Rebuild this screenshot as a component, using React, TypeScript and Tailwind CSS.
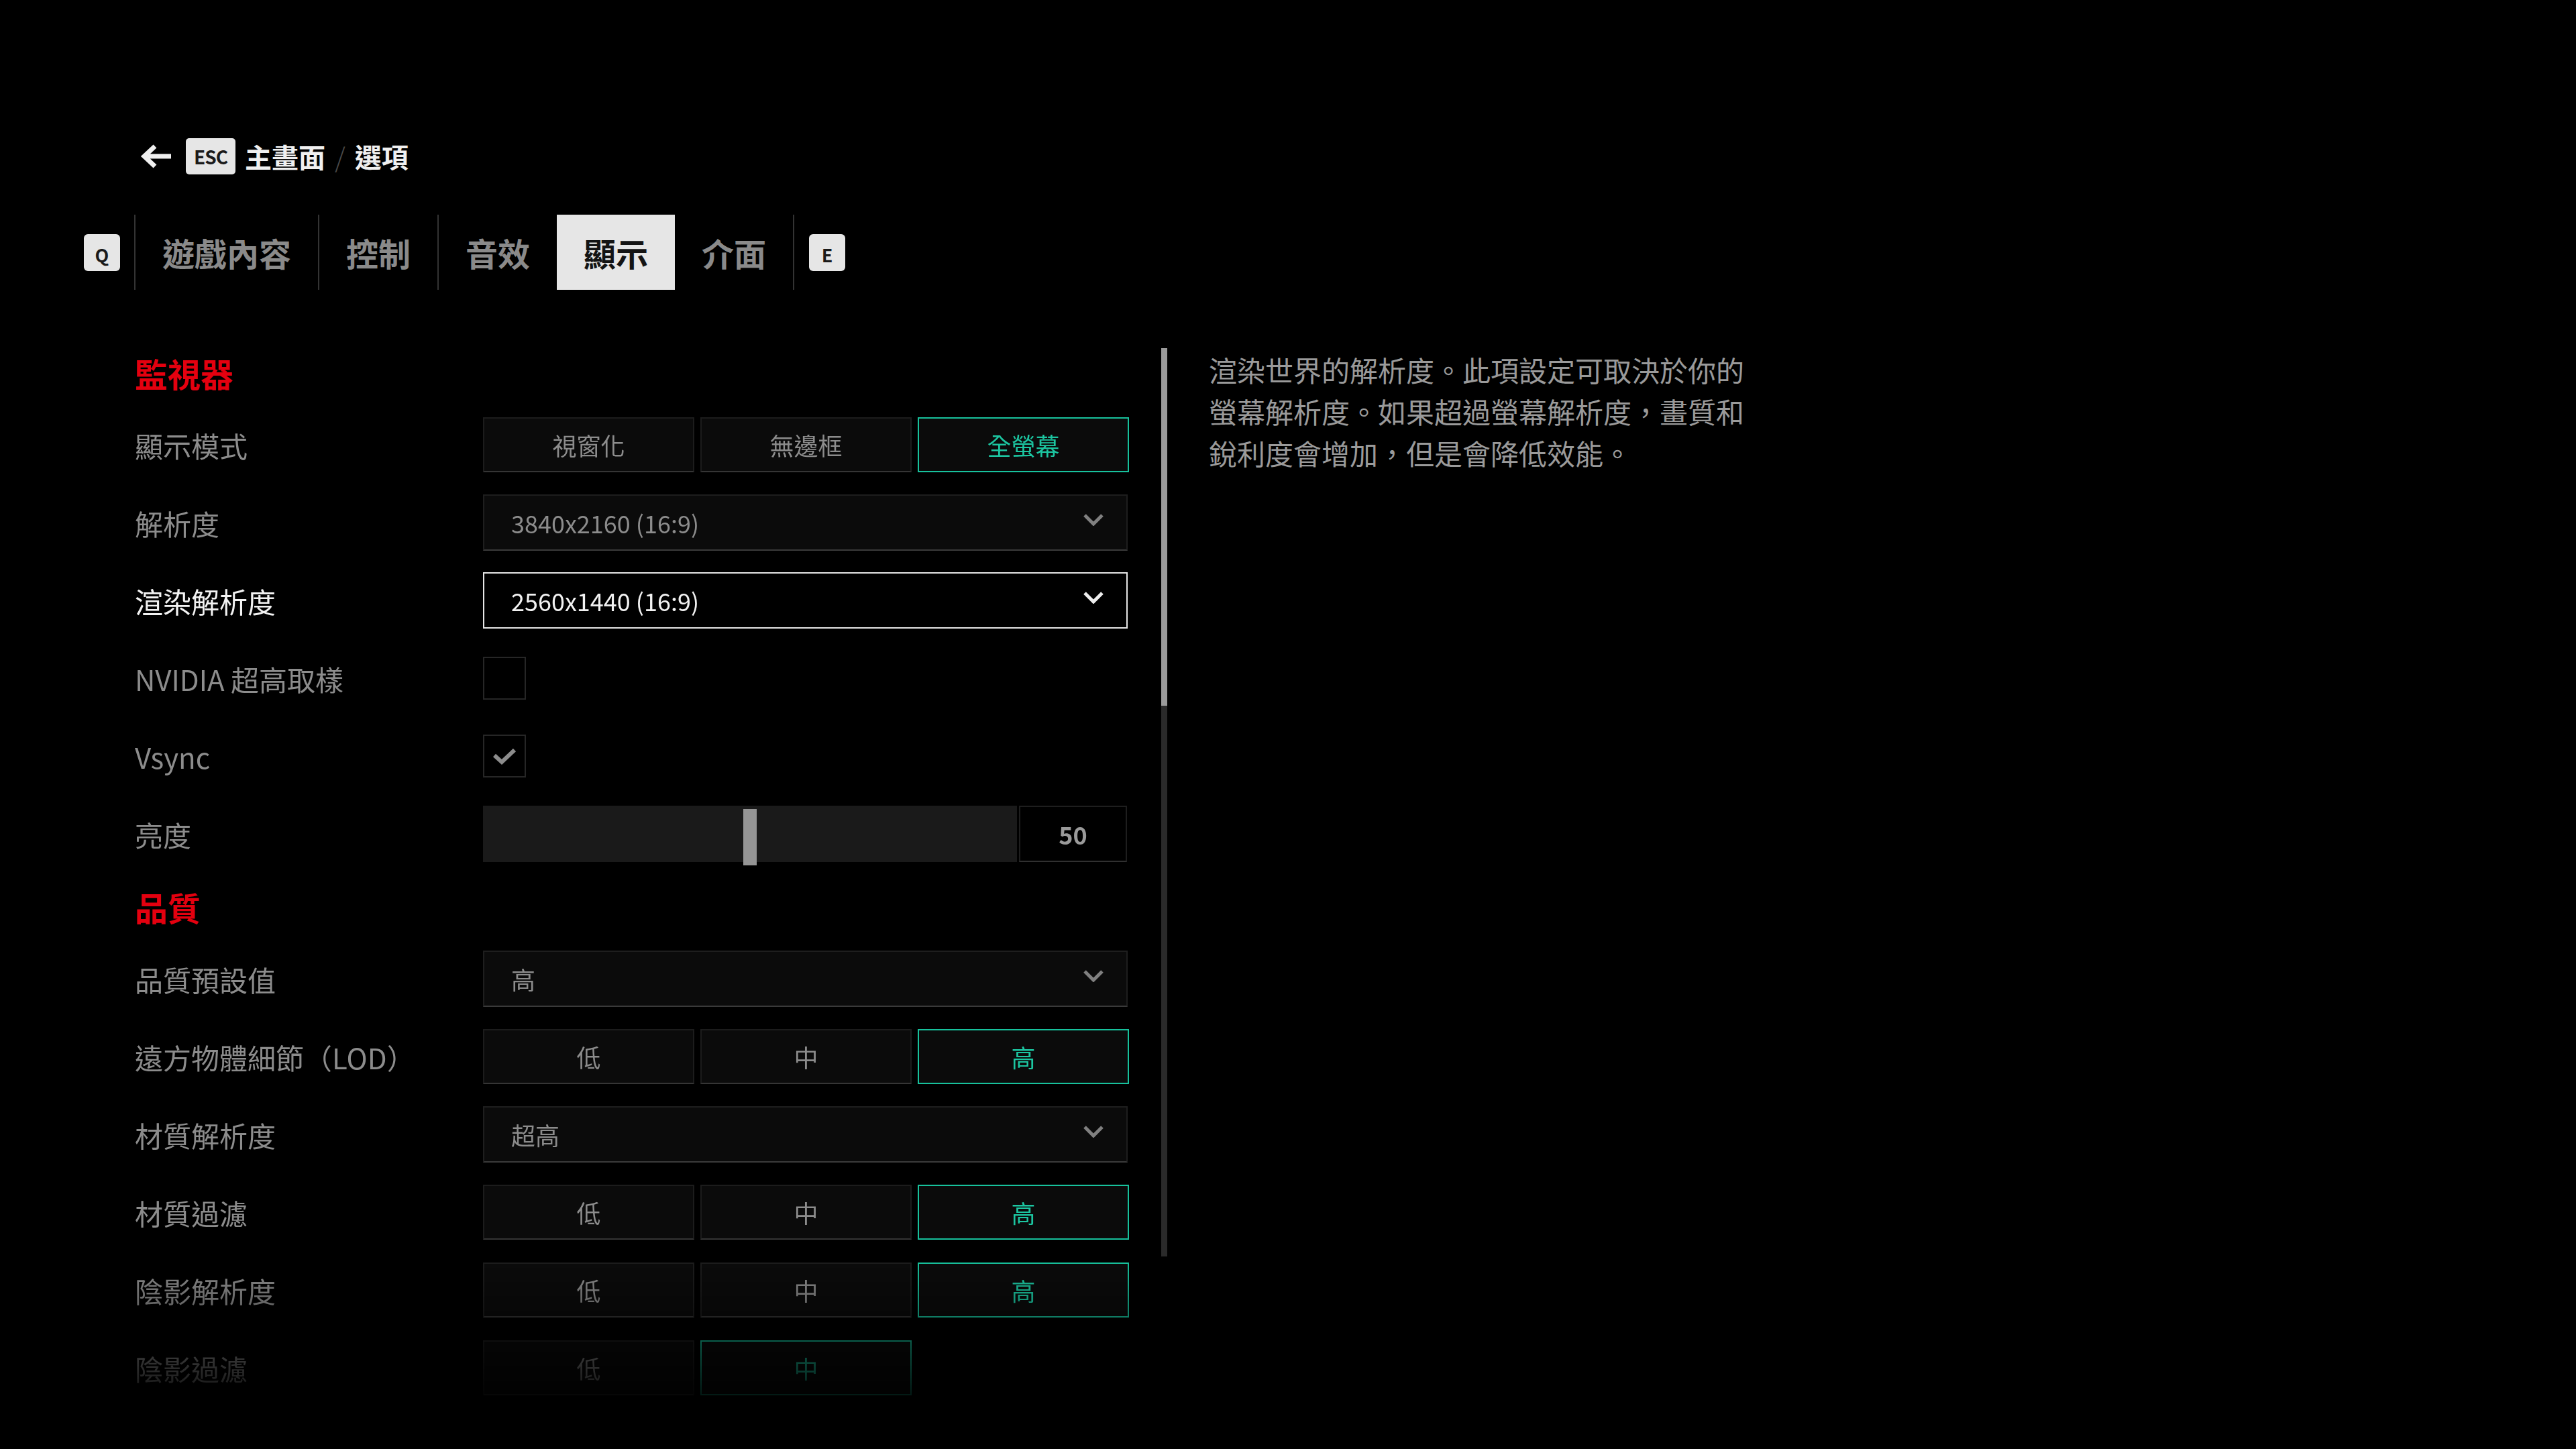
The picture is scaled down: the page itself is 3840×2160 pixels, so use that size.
import type { ReactNode } from "react";

type Row =
  | { label: string; kind: "segment"; options: string[]; value: number }
  | { label: string; kind: "select"; value: string; focused?: boolean }
  | { label: string; kind: "check"; checked: boolean }
  | { label: string; kind: "slider"; value: number };

const sections: { title: string; rows: Row[] }[] = [
  {
    title: "監視器",
    rows: [
      { label: "顯示模式", kind: "segment", options: ["視窗化", "無邊框", "全螢幕"], value: 2 },
      { label: "解析度", kind: "select", value: "3840x2160 (16:9)" },
      { label: "渲染解析度", kind: "select", value: "2560x1440 (16:9)", focused: true },
      { label: "NVIDIA 超高取樣", kind: "check", checked: false },
      { label: "Vsync", kind: "check", checked: true },
      { label: "亮度", kind: "slider", value: 50 },
    ],
  },
  {
    title: "品質",
    rows: [
      { label: "品質預設值", kind: "select", value: "高" },
      { label: "遠方物體細節（LOD）", kind: "segment", options: ["低", "中", "高"], value: 2 },
      { label: "材質解析度", kind: "select", value: "超高" },
      { label: "材質過濾", kind: "segment", options: ["低", "中", "高"], value: 2 },
      { label: "陰影解析度", kind: "segment", options: ["低", "中", "高"], value: 2 },
      { label: "陰影過濾", kind: "segment", options: ["低", "中"], value: 1 },
    ],
  },
];

const tabs = ["遊戲內容", "控制", "音效", "顯示", "介面"];
const activeTab = 3;

function KeyCap({ children }: { children: ReactNode }) {
  return (
    <div className="w-[54px] h-[55px] rounded-[6px] bg-[#e6e6e6] flex items-center justify-center pt-[8px] text-[27px] font-bold text-[#1a1a1a]">
      {children}
    </div>
  );
}

function Chevron({ light }: { light?: boolean }) {
  return (
    <svg width="30" height="18" viewBox="0 0 30 18" className="mb-[8px]">
      <path
        d="M2 2 L15 15 L28 2"
        fill="none"
        stroke={light ? "#ededed" : "#808080"}
        strokeWidth="5"
      />
    </svg>
  );
}

function Control({ row }: { row: Row }) {
  if (row.kind === "segment") {
    return (
      <div className="grid grid-cols-3 gap-[9px] w-[963px]">
        {row.options.map((opt, i) => (
          <div
            key={opt}
            className={`h-[82px] flex items-center justify-center text-[36px] bg-[#0b0b0b] ${
              i === row.value
                ? "border-2 border-[#17c19c] text-[#1cc6a1]"
                : "border-2 border-[#1c1c1c] border-b-[#353535] text-[#8c8c8c]"
            }`}
          >
            {opt}
          </div>
        ))}
      </div>
    );
  }
  if (row.kind === "select") {
    return (
      <div
        className={`w-[961px] h-[84px] flex items-center justify-between pl-[40px] pr-[34px] text-[36px] ${
          row.focused
            ? "bg-black border-2 border-[#e6e6e6] text-[#f2f2f2]"
            : "bg-[#0b0b0b] border-2 border-[#1e1e1e] border-b-[#3a3a3a] text-[#8c8c8c]"
        }`}
      >
        <span>{row.value}</span>
        <Chevron light={row.focused} />
      </div>
    );
  }
  if (row.kind === "check") {
    return (
      <div className="w-[64px] h-[64px] border-2 border-[#262626] bg-black flex items-center justify-center">
        {row.checked && (
          <svg width="36" height="28" viewBox="0 0 36 28">
            <path d="M3 13 L14 23 L33 5" fill="none" stroke="#8c8c8c" strokeWidth="6" />
          </svg>
        )}
      </div>
    );
  }
  return (
    <div className="flex items-center gap-[3px] w-[961px]">
      <div className="relative w-[796px] h-[84px] bg-[#1a1a1a]">
        <div
          className="absolute top-[5px] w-[20px] h-[84px] bg-[#959595]"
          style={{ left: `calc(${row.value}% - 10px)` }}
        />
      </div>
      <div className="w-[161px] h-[84px] border-2 border-[#1e1e1e] border-b-[#303030] bg-black flex items-center justify-center text-[36px] font-bold text-[#9a9a9a]">
        {row.value}
      </div>
    </div>
  );
}

export default function App() {
  return (
    <div className="w-[3840px] h-[2160px] bg-black overflow-hidden font-['Noto_Sans_CJK_TC','Noto_Sans',sans-serif] text-[#8c8c8c]">
      {/* Breadcrumb */}
      <div className="pt-[205px] pl-[207px] h-[260px] flex items-center gap-[14px]">
        <svg width="50" height="36" viewBox="0 0 50 36" className="mr-[6px]">
          <path d="M48 18 H8 M24 3 L8 18 L24 33" fill="none" stroke="#f0f0f0" strokeWidth="7" />
        </svg>
        <div className="w-[74px] h-[54px] rounded-[5px] bg-[#e6e6e6] flex items-center justify-center text-[28px] font-bold text-[#1a1a1a] tracking-[-1px]">
          ESC
        </div>
        <span className="text-[40px] font-bold text-[#f0f0f0]">主畫面</span>
        <span className="text-[40px] text-[#4a4a4a] font-light">/</span>
        <span className="text-[40px] font-bold text-[#f0f0f0]">選項</span>
      </div>

      {/* Tabs */}
      <div className="mt-[60px] pl-[125px] h-[112px] flex items-stretch">
        <div className="flex items-center pr-[21px]">
          <KeyCap>Q</KeyCap>
        </div>
        {tabs.map((tab, i) => {
          const active = i === activeTab;
          const hideBorder = active || i === activeTab + 1;
          return (
            <div
              key={tab}
              className={`flex items-center px-[40px] text-[48px] font-bold ${
                active ? "bg-[#e6e6e6] text-[#141414]" : "text-[#8a8a8a]"
              } ${hideBorder ? "" : "border-l-2 border-[#333]"}`}
            >
              {tab}
            </div>
          );
        })}
        <div className="flex items-center pl-[22px] border-l-2 border-[#333]">
          <KeyCap>E</KeyCap>
        </div>
      </div>

      {/* Settings + description */}
      <div className="mt-[73px] pl-[201px] flex items-start">
        <div className="w-[1482px] h-[1655px] [mask-image:linear-gradient(to_bottom,black_1375px,transparent_1605px)]">
          {sections.map((section) => (
            <div key={section.title}>
              <div className="h-[100px] pt-[2px] flex items-center text-[49px] font-bold text-[#e4000f]">
                {section.title}
              </div>
              {section.rows.map((row) => (
                <div key={row.label} className="h-[116px] flex items-center">
                  <div
                    className={`w-[519px] text-[42px] ${
                      row.kind === "select" && row.focused ? "text-[#f2f2f2]" : "text-[#8c8c8c]"
                    }`}
                  >
                    {row.label}
                  </div>
                  <Control row={row} />
                </div>
              ))}
            </div>
          ))}
        </div>

        {/* Scrollbar */}
        <div className="ml-[48px] mt-[14px] w-[9px] h-[1354px] bg-[#2a2a2a]">
          <div className="w-full h-[533px] bg-[#9a9a9a]" />
        </div>

        <p className="ml-[62px] mt-[15px] w-[810px] text-[42px] leading-[62px] text-[#9a9a9a]">
          渲染世界的解析度。此項設定可取決於你的螢幕解析度。如果超過螢幕解析度，畫質和銳利度會增加，但是會降低效能。
        </p>
      </div>
    </div>
  );
}
